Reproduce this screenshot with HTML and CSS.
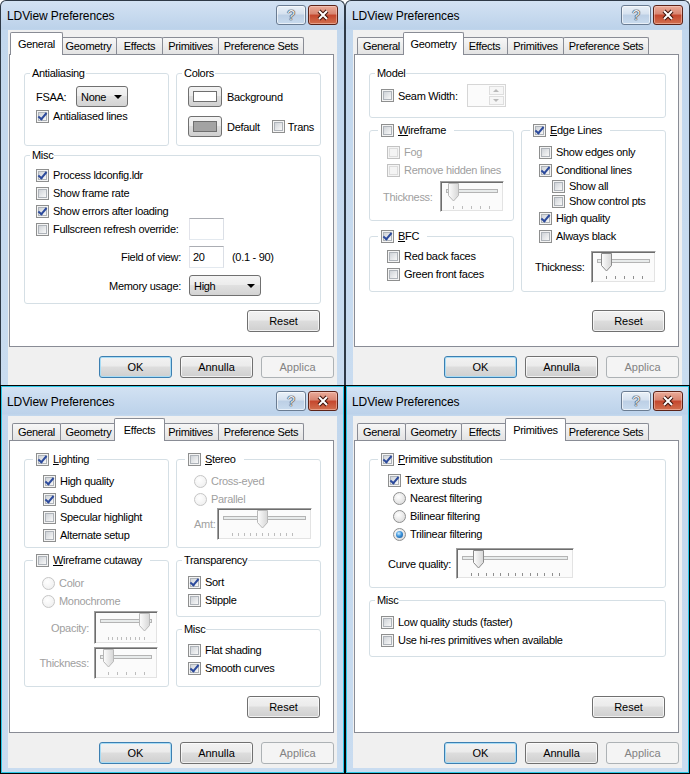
FILE: index.html
```html
<!DOCTYPE html>
<html lang="it">
<head>
  <meta charset="UTF-8">
  <title>LDView Preferences</title>
  <link rel="stylesheet" href="styles.css">
</head>
<body>
  <!-- shared trackbar thumb -->
  <svg class="defs" width="0" height="0" aria-hidden="true">
    <defs>
      <linearGradient id="thumbFill" x1="0" y1="0" x2="1" y2="0">
        <stop offset="0" stop-color="#fdfdfd"/>
        <stop offset="1" stop-color="#d6d6d6"/>
      </linearGradient>
      <path id="thumb" d="M-5 1.5h10v12l-5 5.5l-5-5.5z"/>
    </defs>
  </svg>

  <div class="desk">

    <!-- General -->
    <section class="win">
      <header class="titlebar">
        <span class="title">LDView Preferences</span>
        <span class="tb-help">?</span>
        <span class="tb-close"><svg width="14" height="12" viewBox="0 0 14 12"><path class="x-out" d="M3 2l8 8M11 2l-8 8"/><path class="x-in" d="M3 2l8 8M11 2l-8 8"/></svg></span>
      </header>
      <div class="client">
        <nav class="tabs">
          <span class="tab w-gen sel">General</span>
          <span class="tab w-geo">Geometry</span>
          <span class="tab w-eff">Effects</span>
          <span class="tab w-pri">Primitives</span>
          <span class="tab w-set">Preference Sets</span>
        </nav>
        <div class="panel">
          <div class="pair">
            <fieldset class="grp">
              <legend>Antialiasing</legend>
              <div class="body aa">
                <div class="fsaa"><span class="fsaa-lbl">FSAA:</span><span class="combo c-fsaa">None</span></div>
                <div class="row"><span class="cb on"></span>Antialiased lines</div>
              </div>
            </fieldset>
            <fieldset class="grp">
              <legend>Colors</legend>
              <div class="body colors">
                <div class="crow"><span class="colorbtn"><i class="swatch"></i></span>Background</div>
                <div class="crow"><span class="colorbtn"><i class="swatch dark"></i></span>Default<span class="cb trans"></span>Trans</div>
              </div>
            </fieldset>
          </div>
          <fieldset class="grp gen-misc">
            <legend>Misc</legend>
            <div class="body misc1">
              <div class="row"><span class="cb on"></span>Process ldconfig.ldr</div>
              <div class="row"><span class="cb"></span>Show frame rate</div>
              <div class="row"><span class="cb on"></span>Show errors after loading</div>
              <div class="field"><span class="row"><span class="cb"></span>Fullscreen refresh override:</span><span class="edit tight"></span></div>
              <div class="field fov"><span class="flbl">Field of view:</span><span class="edit">20</span><span>(0.1 - 90)</span></div>
              <div class="field mem"><span class="flbl">Memory usage:</span><span class="combo c-mem">High</span></div>
            </div>
          </fieldset>
          <button class="btn reset">Reset</button>
        </div>
        <div class="actions">
          <button class="btn default">OK</button>
          <button class="btn">Annulla</button>
          <button class="btn" disabled>Applica</button>
        </div>
      </div>
    </section>

    <!-- Geometry -->
    <section class="win">
      <header class="titlebar">
        <span class="title">LDView Preferences</span>
        <span class="tb-help">?</span>
        <span class="tb-close"><svg width="14" height="12" viewBox="0 0 14 12"><path class="x-out" d="M3 2l8 8M11 2l-8 8"/><path class="x-in" d="M3 2l8 8M11 2l-8 8"/></svg></span>
      </header>
      <div class="client">
        <nav class="tabs">
          <span class="tab w-gen">General</span>
          <span class="tab w-geo sel">Geometry</span>
          <span class="tab w-eff">Effects</span>
          <span class="tab w-pri">Primitives</span>
          <span class="tab w-set">Preference Sets</span>
        </nav>
        <div class="panel">
          <fieldset class="grp">
            <legend>Model</legend>
            <div class="body model">
              <div class="row seam"><span class="cb"></span>Seam Width:<span class="spin"><span class="arrows"><i class="up"></i><i class="dn"></i></span></span></div>
            </div>
          </fieldset>
          <div class="pair geo">
            <div class="stack gap9">
              <fieldset class="grp">
                <legend><span class="lgc"><span class="cb"></span><span><u>W</u>ireframe</span></span></legend>
                <div class="body wire">
                  <div class="row off"><span class="cb dis"></span>Fog</div>
                  <div class="row off"><span class="cb dis"></span>Remove hidden lines</div>
                  <div class="srow wire-th">
                    <span class="off">Thickness:</span>
                    <span class="slider"><svg width="62" height="29"><rect class="trk" x="5.5" y="7.5" width="51" height="3"/><path class="tk off" d="M12.5 24v3M21.5 24v3M30.5 24v3M39.5 24v3M48.5 24v3"/><use class="th off" href="#thumb" x="12.5"/></svg></span>
                  </div>
                </div>
              </fieldset>
              <fieldset class="grp grow">
                <legend><span class="lgc"><span class="cb on"></span><span><u>B</u>FC</span></span></legend>
                <div class="body bfc">
                  <div class="row"><span class="cb"></span>Red back faces</div>
                  <div class="row"><span class="cb"></span>Green front faces</div>
                </div>
              </fieldset>
            </div>
            <fieldset class="grp">
              <legend><span class="lgc"><span class="cb on"></span><span><u>E</u>dge Lines</span></span></legend>
              <div class="body edge">
                <div class="row"><span class="cb"></span>Show edges only</div>
                <div class="row"><span class="cb on"></span>Conditional lines</div>
                <div class="row sub h14"><span class="cb"></span>Show all</div>
                <div class="row sub h16"><span class="cb"></span>Show control pts</div>
                <div class="row"><span class="cb on"></span>High quality</div>
                <div class="row"><span class="cb"></span>Always black</div>
                <div class="srow edge-th">
                  <span>Thickness:</span>
                  <span class="slider"><svg width="63" height="30"><rect class="trk" x="5.5" y="7.5" width="52" height="3"/><path class="tk" d="M14.5 24v3M23.5 24v3M32.5 24v3M41.5 24v3M50.5 24v3"/><use class="th" href="#thumb" x="14.5"/></svg></span>
                </div>
              </div>
            </fieldset>
          </div>
          <button class="btn reset">Reset</button>
        </div>
        <div class="actions">
          <button class="btn default">OK</button>
          <button class="btn">Annulla</button>
          <button class="btn" disabled>Applica</button>
        </div>
      </div>
    </section>

    <!-- Effects -->
    <section class="win active">
      <header class="titlebar">
        <span class="title">LDView Preferences</span>
        <span class="tb-help">?</span>
        <span class="tb-close"><svg width="14" height="12" viewBox="0 0 14 12"><path class="x-out" d="M3 2l8 8M11 2l-8 8"/><path class="x-in" d="M3 2l8 8M11 2l-8 8"/></svg></span>
      </header>
      <div class="client">
        <nav class="tabs">
          <span class="tab w-gen">General</span>
          <span class="tab w-geo">Geometry</span>
          <span class="tab w-eff sel">Effects</span>
          <span class="tab w-pri">Primitives</span>
          <span class="tab w-set">Preference Sets</span>
        </nav>
        <div class="panel">
          <div class="fx">
            <fieldset class="grp">
              <legend><span class="lgc"><span class="cb on"></span><span><u>L</u>ighting</span></span></legend>
              <div class="body light">
                <div class="row"><span class="cb on"></span>High quality</div>
                <div class="row"><span class="cb on"></span>Subdued</div>
                <div class="row"><span class="cb"></span>Specular highlight</div>
                <div class="row"><span class="cb"></span>Alternate setup</div>
              </div>
            </fieldset>
            <fieldset class="grp">
              <legend><span class="lgc"><span class="cb"></span><span><u>S</u>tereo</span></span></legend>
              <div class="body stereo">
                <div class="row off"><span class="rb dis"></span>Cross-eyed</div>
                <div class="row off"><span class="rb dis"></span>Parallel</div>
                <div class="srow amt">
                  <span class="off">Amt:</span>
                  <span class="slider"><svg width="93" height="30"><rect class="trk" x="5.5" y="7.5" width="82" height="3"/><path class="tk off" d="M14.5 24v3M20.5 24v3M26.5 24v3M32.5 24v3M38.5 24v3M44.5 24v3M50.5 24v3M56.5 24v3M62.5 24v3M68.5 24v3M74.5 24v3"/><use class="th off" href="#thumb" x="44.5"/></svg></span>
                </div>
              </div>
            </fieldset>
            <fieldset class="grp">
              <legend><span class="lgc"><span class="cb"></span><span><u>W</u>ireframe cutaway</span></span></legend>
              <div class="body cut">
                <div class="row off"><span class="rb dis"></span>Color</div>
                <div class="row off"><span class="rb dis"></span>Monochrome</div>
                <div class="srow2 opac">
                  <span class="off">Opacity:</span>
                  <span class="slider"><svg width="62" height="31"><rect class="trk" x="5.5" y="7.5" width="51" height="3"/><path class="tk off" d="M13.5 25v3M17.5 25v3M22.5 25v3M26.5 25v3M31.5 25v3M35.5 25v3M40.5 25v3M44.5 25v3M49.5 25v3"/><use class="th off" href="#thumb" x="49.5"/></svg></span>
                </div>
                <div class="srow2 cthick">
                  <span class="off">Thickness:</span>
                  <span class="slider"><svg width="62" height="30"><rect class="trk" x="5.5" y="7.5" width="51" height="3"/><path class="tk off" d="M13.5 24v3M22.5 24v3M31.5 24v3M40.5 24v3M49.5 24v3"/><use class="th off" href="#thumb" x="13.5"/></svg></span>
                </div>
              </div>
            </fieldset>
            <div class="stack gap6">
              <fieldset class="grp">
                <legend>Transparency</legend>
                <div class="body trans-body">
                  <div class="row"><span class="cb on"></span>Sort</div>
                  <div class="row"><span class="cb"></span>Stipple</div>
                </div>
              </fieldset>
              <fieldset class="grp grow">
                <legend>Misc</legend>
                <div class="body fx-misc">
                  <div class="row"><span class="cb"></span>Flat shading</div>
                  <div class="row"><span class="cb on"></span>Smooth curves</div>
                </div>
              </fieldset>
            </div>
          </div>
          <button class="btn reset">Reset</button>
        </div>
        <div class="actions">
          <button class="btn default">OK</button>
          <button class="btn">Annulla</button>
          <button class="btn" disabled>Applica</button>
        </div>
      </div>
    </section>

    <!-- Primitives -->
    <section class="win active">
      <header class="titlebar">
        <span class="title">LDView Preferences</span>
        <span class="tb-help">?</span>
        <span class="tb-close"><svg width="14" height="12" viewBox="0 0 14 12"><path class="x-out" d="M3 2l8 8M11 2l-8 8"/><path class="x-in" d="M3 2l8 8M11 2l-8 8"/></svg></span>
      </header>
      <div class="client">
        <nav class="tabs">
          <span class="tab w-gen">General</span>
          <span class="tab w-geo">Geometry</span>
          <span class="tab w-eff">Effects</span>
          <span class="tab w-pri sel">Primitives</span>
          <span class="tab w-set">Preference Sets</span>
        </nav>
        <div class="panel">
          <fieldset class="grp">
            <legend><span class="lgc"><span class="cb on"></span><span><u>P</u>rimitive substitution</span></span></legend>
            <div class="body prim">
              <div class="row"><span class="cb on"></span>Texture studs</div>
              <div class="row ind"><span class="rb"></span>Nearest filtering</div>
              <div class="row ind"><span class="rb"></span>Bilinear filtering</div>
              <div class="row ind"><span class="rb on"></span>Trilinear filtering</div>
              <div class="srow curve">
                <span>Curve quality:</span>
                <span class="slider"><svg width="116" height="29"><rect class="trk" x="5.5" y="7.5" width="105" height="3"/><path class="tk" d="M14.5 24v3M21.5 24v3M29.5 24v3M36.5 24v3M43.5 24v3M51.5 24v3M58.5 24v3M65.5 24v3M73.5 24v3M80.5 24v3M87.5 24v3M95.5 24v3M102.5 24v3"/><use class="th" href="#thumb" x="21.5"/></svg></span>
              </div>
            </div>
          </fieldset>
          <fieldset class="grp pri-misc">
            <legend>Misc</legend>
            <div class="body misc4">
              <div class="row"><span class="cb"></span>Low quality studs (faster)</div>
              <div class="row"><span class="cb"></span>Use hi-res primitives when available</div>
            </div>
          </fieldset>
          <button class="btn reset">Reset</button>
        </div>
        <div class="actions">
          <button class="btn default">OK</button>
          <button class="btn">Annulla</button>
          <button class="btn" disabled>Applica</button>
        </div>
      </div>
    </section>

  </div>
</body>
</html>
```

FILE: styles.css
```css
body {
  margin: 0;
  background: #fff;
  font-family: "Liberation Sans", Arial, sans-serif;
  font-size: 11px;
  letter-spacing: -0.3px;
  color: #000;
}
.defs {
  display: block;
  width: 0;
  height: 0;
}
.desk {
  display: grid;
  grid-template-columns: 345px 345px;
  grid-template-rows: 385px 389px;
  width: 690px;
  height: 774px;
  overflow: hidden;
}

/* window frame */
.win {
  display: flex;
  flex-direction: column;
  box-sizing: border-box;
  min-height: 0;
  border: 1px solid #2e3946;
  border-bottom: none;
  border-radius: 6px 6px 0 0;
  padding: 0 7px;
  background: linear-gradient(#d3e2f3, #bcd2ea 28px, #c2d7ed 29px, #c9dcf0);
  overflow: hidden;
}
.win.active {
  border: 1px solid #050505;
  border-radius: 0;
  padding: 1px 7px 5px;
  box-shadow: inset 0 0 0 1px #2cc6e6;
}
.titlebar {
  display: flex;
  align-items: center;
  flex: none;
  height: 29px;
  margin: 0 -7px;
  padding: 0 6px;
}
.title {
  flex: 1;
  font-size: 12px;
  letter-spacing: -0.1px;
}
.tb-help,
.tb-close {
  display: flex;
  align-items: center;
  justify-content: center;
  align-self: flex-start;
  width: 30px;
  height: 20px;
  box-sizing: border-box;
  margin-top: 4px;
  border-radius: 3px;
}
.tb-help {
  margin-right: 2px;
  border: 1px solid #6a7c92;
  background: linear-gradient(#eaf1f8, #d5e1ef 45%, #bccfe5 50%, #c9dbee);
  box-shadow: inset 0 0 0 1px rgba(255, 255, 255, 0.6);
  color: #eef1f5;
  font-size: 14px;
  text-shadow: 0 0 1px #1d2a3a, 0 0 1px #1d2a3a, 0 0 1px #1d2a3a;
}
.tb-close {
  border: 1px solid #5c2318;
  background: linear-gradient(#eaab99, #d88571 45%, #c4462d 50%, #d2704f);
  box-shadow: inset 0 0 0 1px rgba(255, 220, 210, 0.45);
}
.x-out {
  fill: none;
  stroke: #3d120a;
  stroke-width: 4;
}
.x-in {
  fill: none;
  stroke: #fff;
  stroke-width: 2;
}

/* dialog body */
.client {
  flex: 1;
  min-height: 0;
  display: flex;
  flex-direction: column;
  background: #f0f0f0;
}
.tabs {
  display: flex;
  align-items: flex-end;
  flex: none;
  height: 24px;
  padding-left: 4px;
}
.tab {
  display: flex;
  align-items: center;
  justify-content: center;
  height: 16px;
  border: 1px solid #898c95;
  border-bottom: none;
  border-radius: 2px 2px 0 0;
  margin-right: -1px;
  background: linear-gradient(#f7f7f7, #e3e3e3);
}
.tab.sel {
  position: relative;
  z-index: 1;
  height: 21px;
  padding: 0 2px 1px;
  margin: 0 -3px -1px -2px;
  background: #fff;
}
.w-gen { width: 47px; }
.w-geo { width: 55px; }
.w-eff { width: 45px; }
.w-pri { width: 55px; }
.w-set { width: 84px; }

.panel {
  display: flex;
  flex-direction: column;
  flex: none;
  width: 325px;
  height: 293px;
  box-sizing: border-box;
  margin-left: 1px;
  padding: 12px 12px 0 14px;
  border: 1px solid #898c95;
  background: #fff;
}
.actions {
  display: flex;
  justify-content: flex-end;
  gap: 8px;
  margin-top: 9px;
  padding-right: 3px;
}

/* buttons */
.btn {
  width: 73px;
  height: 22px;
  box-sizing: border-box;
  padding: 0;
  border: 1px solid #707070;
  border-radius: 3px;
  background: linear-gradient(#f2f2f2, #ebebeb 45%, #dddddd 50%, #cfcfcf);
  box-shadow: inset 0 0 0 1px rgba(255, 255, 255, 0.7);
  font: inherit;
  color: #000;
}
.btn.default {
  border-color: #3c7fb1;
  box-shadow: inset 0 0 0 1px #a8dcf5;
}
.btn:disabled {
  border-color: #adb2b5;
  background: #f4f4f4;
  box-shadow: none;
  color: #838383;
}
.reset {
  margin: auto 1px 14px auto;
}

/* group boxes */
.grp {
  min-width: 0;
  margin: 0;
  padding: 0;
  border: 1px solid #d5dfe5;
  border-radius: 3px;
}
.grp legend {
  margin-left: 5px;
  padding: 0 1px 0 2px;
  line-height: 13px;
}
.grp legend:has(.lgc) {
  margin-left: 8px;
  padding: 0 8px 0 3px;
}
.lgc {
  display: flex;
  align-items: center;
  gap: 4px;
  height: 13px;
}
.body {
  display: flex;
  flex-direction: column;
}
.pair {
  display: grid;
  grid-template-columns: 1fr 1fr;
  column-gap: 7px;
}
.stack {
  display: flex;
  flex-direction: column;
}
.gap9 { gap: 9px; }
.gap6 { gap: 6px; }
.grow { flex: 1; }

.row {
  display: flex;
  align-items: center;
  gap: 4px;
  height: 18px;
  white-space: nowrap;
}
.off { color: #a0a0a0; }
.h14 { height: 14px; }
.h16 { height: 16px; }
.sub { margin-left: 13px; }
.ind { margin-left: 5px; }

/* check boxes and radios */
.cb,
.rb {
  position: relative;
  flex: none;
  width: 13px;
  height: 13px;
  box-sizing: border-box;
  border: 1px solid #8e8f8f;
  background: #f4f4f4;
}
.cb::before {
  content: "";
  position: absolute;
  left: 1px;
  top: 1px;
  width: 9px;
  height: 9px;
  box-sizing: border-box;
  border: 1px solid #aeb3b9;
  background: linear-gradient(135deg, #cfd3d8, #f8f8f8);
}
.cb.on::after {
  content: "";
  position: absolute;
  left: 3px;
  top: 0;
  width: 3px;
  height: 7px;
  border: solid #2c4a9c;
  border-width: 0 2px 2px 0;
  transform: rotate(40deg);
}
.cb.dis {
  border-color: #c2c2c2;
}
.cb.dis::before {
  border-color: #dcdcdc;
  background: #f4f4f4;
}
.rb {
  border-radius: 50%;
  background: radial-gradient(circle at 40% 35%, #fff, #d4d4d4);
}
.rb.dis {
  border-color: #c6c6c6;
  background: radial-gradient(circle at 40% 35%, #fff, #ececec);
}
.rb.on::after {
  content: "";
  position: absolute;
  left: 2px;
  top: 2px;
  width: 7px;
  height: 7px;
  border-radius: 50%;
  background: radial-gradient(circle at 40% 35%, #d2efff 0, #3d94db 45%, #0f4a8e);
}

/* General tab */
.aa {
  padding: 6px 0 20px 11px;
}
.fsaa {
  display: flex;
  align-items: center;
  height: 21px;
}
.fsaa-lbl {
  width: 40px;
}
.colors {
  gap: 9px;
  padding: 6px 0 8px 11px;
}
.crow {
  display: flex;
  align-items: center;
  gap: 5px;
  height: 21px;
}
.cb.trans {
  margin: 0 -2px 0 7px;
}
.colorbtn {
  display: flex;
  align-items: center;
  justify-content: center;
  width: 34px;
  height: 21px;
  box-sizing: border-box;
  border: 1px solid #707070;
  border-radius: 3px;
  background: linear-gradient(#f2f2f2, #ebebeb 45%, #dddddd 50%, #cfcfcf);
}
.swatch {
  width: 24px;
  height: 11px;
  box-sizing: border-box;
  border: 1px solid #6f6f6f;
  background: #fff;
}
.swatch.dark {
  background: #a3a3a3;
}
.combo {
  display: flex;
  align-items: center;
  height: 21px;
  box-sizing: border-box;
  padding-left: 4px;
  border: 1px solid #707070;
  border-radius: 3px;
  background: linear-gradient(#f4f4f4, #ececec 45%, #e0e0e0 50%, #d3d3d3);
}
.combo::after {
  content: "";
  margin: 1px 5px 0 auto;
  border-left: 4px solid transparent;
  border-right: 4px solid transparent;
  border-top: 4px solid #000;
}
.c-fsaa { width: 52px; }
.c-mem { width: 72px; }
.gen-misc {
  margin-top: 3px;
}
.misc1 {
  padding: 4px 0 7px 11px;
}
.field {
  display: grid;
  grid-template-columns: 145px auto auto;
  column-gap: 8px;
  align-items: center;
  justify-content: start;
}
.flbl {
  text-align: right;
}
.edit {
  display: flex;
  align-items: center;
  width: 35px;
  height: 22px;
  box-sizing: border-box;
  padding: 0 3px;
  border: 1px solid;
  border-color: #abadb3 #dbdfe6 #e3e9ef #e2e3ea;
  background: #fff;
}
.edit.tight {
  margin: -2px 0;
}
.fov {
  margin-top: 8px;
}
.mem {
  margin-top: 7px;
}

/* Geometry tab */
.model {
  padding: 4px 0 10px 11px;
}
.seam {
  height: 23px;
}
.spin {
  display: flex;
  justify-content: flex-end;
  width: 39px;
  height: 23px;
  box-sizing: border-box;
  margin-left: 5px;
  padding: 1px;
  border: 1px solid #d6d6d6;
  background: #fbfbfb;
}
.arrows {
  display: flex;
  flex-direction: column;
  gap: 1px;
  width: 15px;
}
.arrows i {
  display: flex;
  align-items: center;
  justify-content: center;
  flex: 1;
  border: 1px solid #dedede;
  background: #f6f6f6;
}
.arrows .up::after {
  content: "";
  border-left: 3px solid transparent;
  border-right: 3px solid transparent;
  border-bottom: 3px solid #b9b9b9;
}
.arrows .dn::after {
  content: "";
  border-left: 3px solid transparent;
  border-right: 3px solid transparent;
  border-top: 3px solid #b9b9b9;
}
.geo {
  margin-top: 6px;
}
.wire {
  padding: 6px 0 8px 17px;
}
.bfc {
  padding: 4px 0 8px 17px;
}
.edge {
  padding: 6px 0 8px 17px;
}
.srow {
  display: flex;
  align-items: center;
}
.wire-th {
  gap: 7px;
  margin: 2px 0 0 -4px;
}
.edge-th {
  gap: 6px;
  margin: 6px 0 0 -4px;
}

/* trackbars */
.slider {
  display: block;
  flex: none;
  border: 1px solid;
  border-color: #a0a0a0 #fff #fff #a0a0a0;
  box-shadow: inset 1px 1px 0 #6d6d6d, inset -1px -1px 0 #e3e3e3;
  background: #fbfbfb;
}
.slider svg {
  display: block;
}
.trk {
  fill: #e8ebeb;
  stroke: #b4b4b4;
}
.tk {
  stroke: #8f8f8f;
}
.tk.off {
  stroke: #bdbdbd;
}
.th {
  fill: url(#thumbFill);
  stroke: #8a8a8a;
}
.th.off {
  stroke: #b8b8b8;
}

/* Effects tab */
.fx {
  display: grid;
  grid-template-columns: 1fr 1fr;
  column-gap: 7px;
  row-gap: 6px;
}
.light {
  padding: 6px 0 3px 18px;
}
.stereo {
  padding: 6px 0 7px 17px;
}
.amt {
  gap: 2px;
}
.cut {
  padding: 7px 0 7px 17px;
}
.srow2 {
  display: grid;
  grid-template-columns: 64px auto;
  column-gap: 5px;
  align-items: center;
  justify-content: start;
  margin-left: -17px;
}
.srow2 > span:first-child {
  text-align: right;
}
.opac {
  margin-top: 1px;
}
.cthick {
  margin-top: 3px;
}
.trans-body {
  padding: 6px 0 7px 11px;
}
.fx-misc {
  padding: 5px 0 7px 11px;
}

/* Primitives tab */
.prim {
  padding: 5px 0 8px 18px;
}
.curve {
  gap: 5px;
  margin-top: 5px;
}
.pri-misc {
  margin-top: 6px;
}
.misc4 {
  padding: 6px 0 7px 11px;
}
```
